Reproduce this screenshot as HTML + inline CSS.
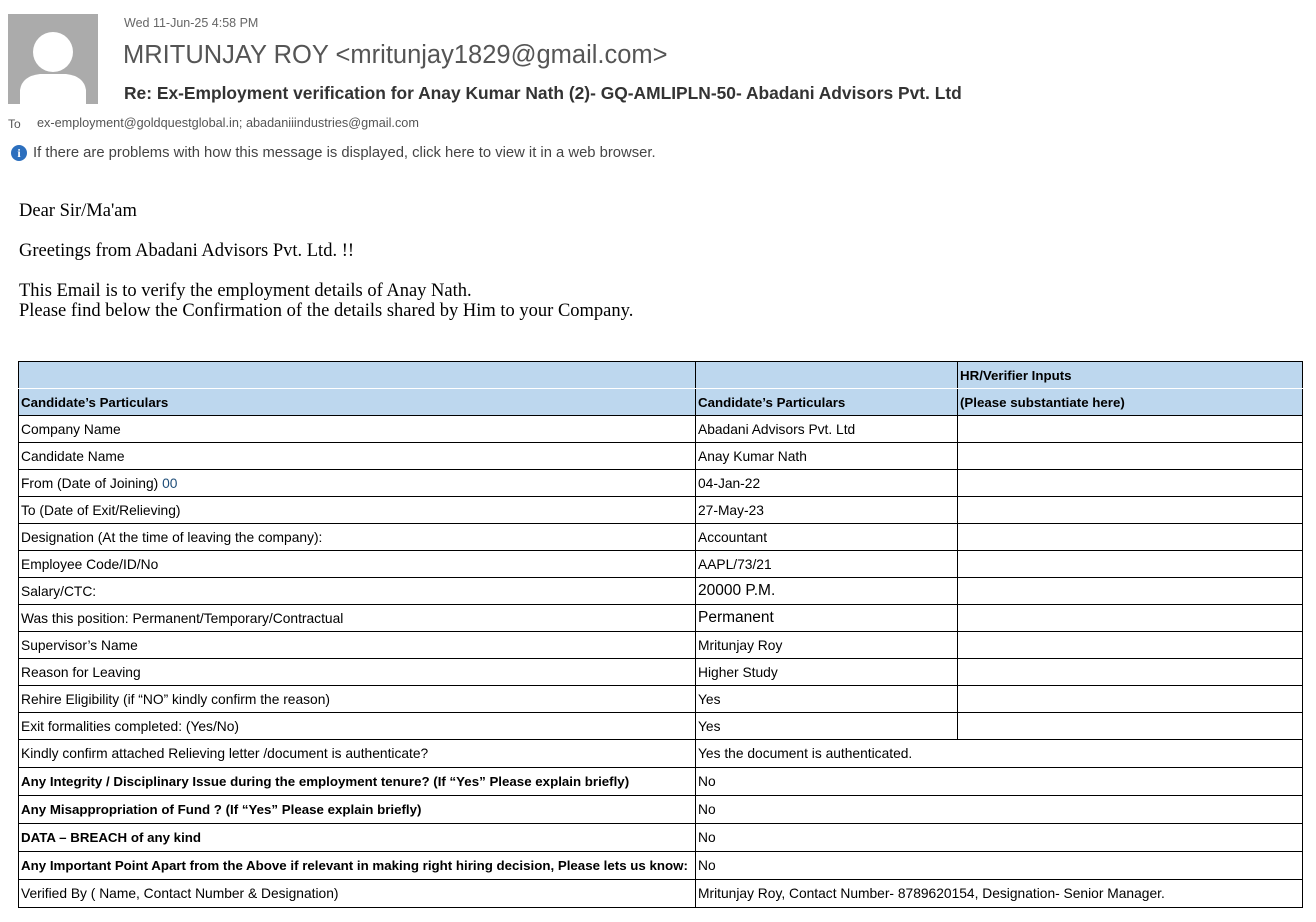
<!DOCTYPE html>
<html><head><meta charset="utf-8"><style>
body{margin:0;background:#fff;width:1316px;height:922px;position:relative;font-family:"Liberation Sans",sans-serif;overflow:hidden}
.a{position:absolute;white-space:nowrap}
table{position:absolute;left:18px;top:361px;border-collapse:collapse;width:1285px;font-size:13.8px;color:#000}
td{border:1px solid #000;padding:0 2px;height:26px;vertical-align:middle;white-space:nowrap}
tr.h td{background:#bdd7ee;font-weight:bold;font-size:13.3px}
tr.t td{height:27px}
tr.t td b{font-size:13.3px}
</style></head><body>
<div class="a" style="left:8px;top:14px;width:90px;height:90px;background:#ababab;overflow:hidden">
<svg width="90" height="90"><circle cx="45" cy="38" r="20" fill="#fff"/><path d="M12 90 L12 76 Q14 62 32 60 L58 60 Q76 62 78 76 L78 90Z" fill="#fff"/></svg></div>
<div class="a" style="left:124px;top:16px;font-size:12.5px;color:#666">Wed 11-Jun-25 4:58 PM</div>
<div class="a" style="left:123px;top:41px;font-size:25.5px;color:#555">MRITUNJAY ROY &lt;mritunjay1829@gmail.com&gt;</div>
<div class="a" style="left:124px;top:83px;font-size:17.4px;font-weight:bold;color:#333">Re: Ex-Employment verification for Anay Kumar Nath (2)- GQ-AMLIPLN-50- Abadani Advisors Pvt. Ltd</div>
<div class="a" style="left:8px;top:117px;font-size:12px;color:#555">To</div>
<div class="a" style="left:37px;top:116px;font-size:12.7px;color:#555">ex-employment@goldquestglobal.in; abadaniiindustries@gmail.com</div>
<div class="a" style="left:11px;top:145px;width:16px;height:16px;border-radius:50%;background:#2c6fbe;color:#fff;font:bold 12px 'Liberation Serif',serif;text-align:center;line-height:16px">i</div>
<div class="a" style="left:33px;top:145px;font-size:14.8px;color:#444">If there are problems with how this message is displayed, click here to view it in a web browser.</div>
<div class="a" style="left:19px;top:201px;font:18.5px 'Liberation Serif',serif;line-height:20px">Dear Sir/Ma'am<br><br>Greetings from Abadani Advisors Pvt. Ltd. !!<br><br>This Email is to verify the employment details of Anay Nath.<br>Please find below the Confirmation of the details shared by Him to your Company.</div>
<table>
<colgroup><col style="width:677px"><col style="width:262px"><col></colgroup>
<tr class="h"><td style="border-bottom:1px solid #fff"></td><td style="border-bottom:1px solid #fff"></td><td style="border-bottom:1px solid #fff">HR/Verifier Inputs</td></tr>
<tr class="h"><td>Candidate’s Particulars</td><td>Candidate’s Particulars</td><td>(Please substantiate here)</td></tr>
<tr><td>Company Name</td><td>Abadani Advisors Pvt. Ltd</td><td></td></tr>
<tr><td>Candidate Name</td><td>Anay Kumar Nath</td><td></td></tr>
<tr><td>From (Date of Joining) <span style="color:#1f4e79">00</span></td><td>04-Jan-22</td><td></td></tr>
<tr><td>To (Date of Exit/Relieving)</td><td>27-May-23</td><td></td></tr>
<tr><td>Designation (At the time of leaving the company):</td><td>Accountant</td><td></td></tr>
<tr><td>Employee Code/ID/No</td><td>AAPL/73/21</td><td></td></tr>
<tr><td>Salary/CTC:</td><td style="font-size:15.5px">20000 P.M.</td><td></td></tr>
<tr><td>Was this position: Permanent/Temporary/Contractual</td><td style="font-size:15.5px">Permanent</td><td></td></tr>
<tr><td>Supervisor’s Name</td><td>Mritunjay Roy</td><td></td></tr>
<tr><td>Reason for Leaving</td><td>Higher Study</td><td></td></tr>
<tr><td>Rehire Eligibility (if “NO” kindly confirm the reason)</td><td>Yes</td><td></td></tr>
<tr><td>Exit formalities completed: (Yes/No)</td><td>Yes</td><td></td></tr>
<tr class="t"><td>Kindly confirm attached Relieving letter /document is authenticate?</td><td colspan="2">Yes the document is authenticated.</td></tr>
<tr class="t"><td><b>Any Integrity / Disciplinary Issue during the employment tenure? (If “Yes” Please explain briefly)</b></td><td colspan="2">No</td></tr>
<tr class="t"><td><b>Any Misappropriation of Fund ? (If “Yes” Please explain briefly)</b></td><td colspan="2">No</td></tr>
<tr class="t"><td><b>DATA – BREACH of any kind</b></td><td colspan="2">No</td></tr>
<tr class="t"><td><b>Any Important Point Apart from the Above if relevant in making right hiring decision, Please lets us know:</b></td><td colspan="2">No</td></tr>
<tr class="t"><td>Verified By ( Name, Contact Number &amp; Designation)</td><td colspan="2">Mritunjay Roy, Contact Number- 8789620154, Designation- Senior Manager.</td></tr>
</table>
</body></html>
